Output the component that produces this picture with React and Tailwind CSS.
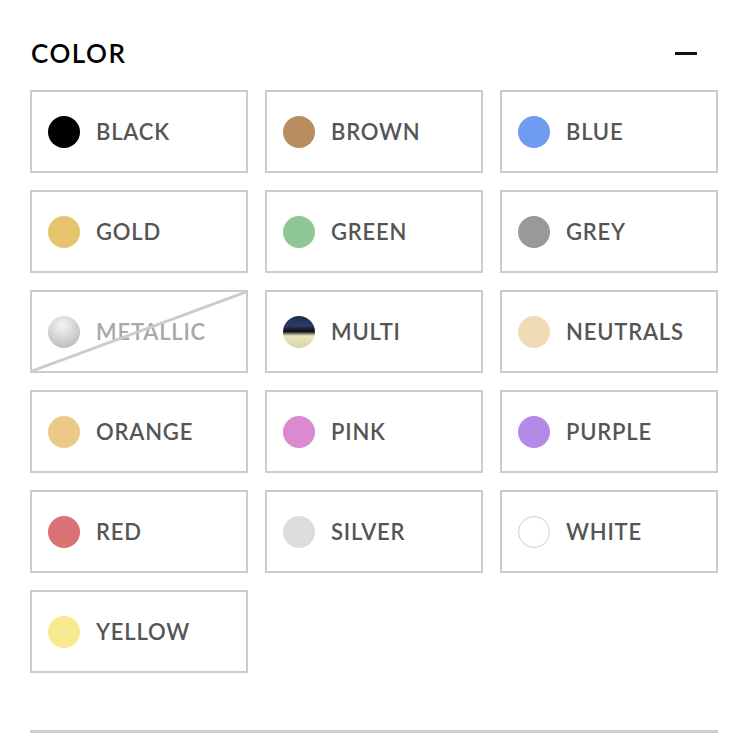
import React from 'react';

const colors = [
  { name: 'BLACK', swatch: 'bg-black' },
  { name: 'BROWN', swatch: 'bg-[#b98d5f]' },
  { name: 'BLUE', swatch: 'bg-[#6f9cee]' },
  { name: 'GOLD', swatch: 'bg-[#e6c46e]' },
  { name: 'GREEN', swatch: 'bg-[#8ec795]' },
  { name: 'GREY', swatch: 'bg-[#999999]' },
  { name: 'METALLIC', swatch: 'bg-[radial-gradient(circle_at_45%_30%,#f4f4f4,#d2d2d2_50%,#b0b0b0)]', disabled: true },
  { name: 'MULTI', swatch: 'bg-[linear-gradient(180deg,#1c2a4a_0%,#2d3d66_30%,#0d0d14_48%,#e9e6bd_62%,#d8d2a8_100%)]' },
  { name: 'NEUTRALS', swatch: 'bg-[#efdcb4]' },
  { name: 'ORANGE', swatch: 'bg-[#edc987]' },
  { name: 'PINK', swatch: 'bg-[#d98ad0]' },
  { name: 'PURPLE', swatch: 'bg-[#b28ae8]' },
  { name: 'RED', swatch: 'bg-[#d87276]' },
  { name: 'SILVER', swatch: 'bg-[#dcdcdc]' },
  { name: 'WHITE', swatch: 'bg-white border border-[#cfcfcf]' },
  { name: 'YELLOW', swatch: 'bg-[#f6ea92]' },
];

function ColorOption({ name, swatch, disabled }) {
  return (
    <button
      className={`relative h-[83px] flex items-center gap-4 pl-[16px] border-2 border-[#cccccc] bg-white overflow-hidden ${
        disabled ? 'cursor-not-allowed' : 'cursor-pointer'
      }`}
    >
      <span className={`w-8 h-8 rounded-full shrink-0 ${swatch}`} />
      <span
        className={`text-[22px] font-semibold tracking-[0.8px] ${disabled ? 'text-[#a8a8a8]' : 'text-[#555555]'}`}
      >
        {name}
      </span>
      {disabled && (
        <svg className="absolute inset-0 w-full h-full pointer-events-none" preserveAspectRatio="none" viewBox="0 0 100 100">
          <line x1="0" y1="100" x2="100" y2="0" stroke="#cccccc" strokeWidth="3" vectorEffect="non-scaling-stroke" />
        </svg>
      )}
    </button>
  );
}

export default function App() {
  return (
    <div className="w-[748px] h-[734px] bg-white px-[30px] pt-[36px] font-['Lato',sans-serif]">
      <div className="flex items-center justify-between h-[34px]">
        <h2 className="text-[26px] font-semibold text-black tracking-[1.5px] leading-none pl-[1px]">COLOR</h2>
        <span className="block w-[22px] h-[3px] bg-[#111111] mr-[21px]" />
      </div>
      <div className="grid grid-cols-3 gap-x-[17px] gap-y-[17px] mt-[20px]">
        {colors.map((c) => (
          <ColorOption key={c.name} {...c} />
        ))}
      </div>
      <div className="mt-[57px] h-[3px] bg-[#cccccc]" />
    </div>
  );
}
